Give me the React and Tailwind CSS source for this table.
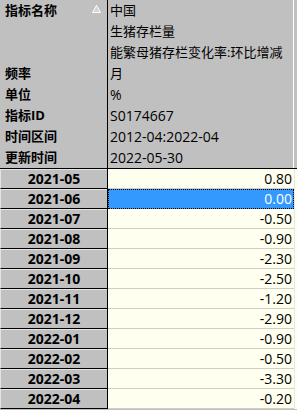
import React from "react";

const meta = [
  { label: "指标名称", value: "中国", sort: true },
  { label: "", value: "生猪存栏量" },
  { label: "", value: "能繁母猪存栏变化率:环比增减" },
  { label: "频率", value: "月" },
  { label: "单位", value: "%", latin: true },
  { label: "指标ID", value: "S0174667", latin: true },
  { label: "时间区间", value: "2012-04:2022-04", latin: true },
  { label: "更新时间", value: "2022-05-30", latin: true },
];

const rows = [
  ["2021-05", "0.80"],
  ["2021-06", "0.00"],
  ["2021-07", "-0.50"],
  ["2021-08", "-0.90"],
  ["2021-09", "-2.30"],
  ["2021-10", "-2.50"],
  ["2021-11", "-1.20"],
  ["2021-12", "-2.90"],
  ["2022-01", "-0.90"],
  ["2022-02", "-0.50"],
  ["2022-03", "-3.30"],
  ["2022-04", "-0.20"],
];

const font = "font-['Open_Sans','Noto_Sans_CJK_SC',sans-serif]";

function SortArrow() {
  return (
    <svg width="9" height="8" viewBox="0 0 9 8" className="absolute right-[6px] top-[5px]">
      <polygon points="4.5,0.5 8.5,7.5 0.5,7.5" fill="#d4d4d4" stroke="#ffffff" strokeWidth="1" />
    </svg>
  );
}

export default function App() {
  const selected = "2021-06";
  return (
    <div className={`w-[297px] h-[410px] overflow-hidden bg-[#c0c0c0] text-black ${font}`}>
      {/* indicator info */}
      <div className="border-b border-black">
        {meta.map((m, i) => (
          <div key={i} className="flex h-[21px]">
            <div className="relative w-[107px] pl-[5px] text-[13px] leading-[21px] font-bold">
              {m.label}
              {m.sort && <SortArrow />}
            </div>
            <div className="w-px bg-black" />
            <div
              className={`flex-1 pl-[2px] leading-[21px] whitespace-nowrap ${
                m.latin ? "text-[14px]" : "text-[13px]"
              }`}
            >
              {m.value}
            </div>
            <div className="w-[4px] border-l border-white" />
          </div>
        ))}
      </div>

      {/* monthly values */}
      {rows.map(([date, val]) => {
        const isSel = date === selected;
        return (
          <div key={date} className="flex h-[20px]">
            <div className="w-[107px] bg-[#c0c0c0] border-t border-l border-[#e4e4e4] border-b border-b-black text-center text-[14px] font-bold leading-[18px]">
              {date}
            </div>
            <div className="w-px bg-black" />
            {isSel ? (
              <div className="flex-1 bg-[#3399ff] border border-dotted border-black text-right pr-[1px] text-[14px] leading-[18px] text-white">
                {val}
              </div>
            ) : (
              <div className="flex-1 bg-[#fffff0] border-b border-[#cfcfc4] text-right pr-[2px] text-[14px] leading-[19px]">
                {val}
              </div>
            )}
            <div className="w-[3px] bg-[#fffff0] border-l border-[#e8e8e0]" />
          </div>
        );
      })}
    </div>
  );
}
